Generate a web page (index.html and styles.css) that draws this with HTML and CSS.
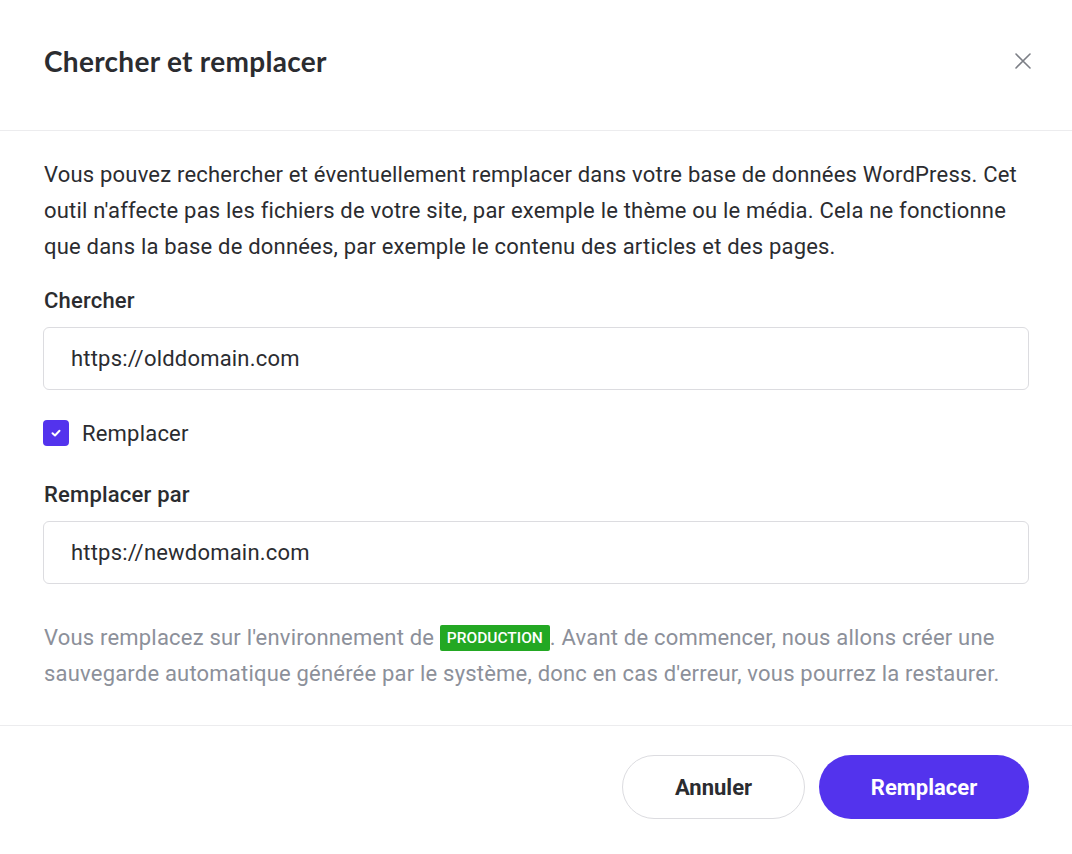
FILE: index.html
```html
<!DOCTYPE html>
<html lang="fr">
<head>
<meta charset="utf-8">
<link rel="stylesheet" href="styles.css">
</head>
<body>
<div class="modal">
  <header class="modal-header">
    <h1 class="modal-title">Chercher et remplacer</h1>
    <button class="close" aria-label="Fermer">
      <svg width="18" height="18" viewBox="0 0 18 18"><path d="M2 2 L16 16 M16 2 L2 16" stroke="#7c7f86" stroke-width="1.6" stroke-linecap="round" fill="none"/></svg>
    </button>
  </header>
  <main class="modal-body">
    <p class="intro">Vous pouvez rechercher et éventuellement remplacer dans votre base de données WordPress. Cet outil n'affecte pas les fichiers de votre site, par exemple le thème ou le média. Cela ne fonctionne que dans la base de données, par exemple le contenu des articles et des pages.</p>
    <label class="field-label">Chercher</label>
    <div class="input">https://olddomain.com</div>
    <div class="check-row">
      <span class="checkbox"><svg width="14" height="14" viewBox="0 0 14 14"><path d="M3.5 7.2 L6 9.5 L10.5 4.8" stroke="#fff" stroke-width="2" stroke-linecap="round" stroke-linejoin="round" fill="none"/></svg></span>
      <span class="check-label">Remplacer</span>
    </div>
    <label class="field-label">Remplacer par</label>
    <div class="input">https://newdomain.com</div>
    <p class="note">Vous remplacez sur l'environnement de <span class="badge">PRODUCTION</span>. Avant de commencer, nous allons créer une sauvegarde automatique générée par le système, donc en cas d'erreur, vous pourrez la restaurer.</p>
  </main>
  <footer class="modal-footer">
    <button class="btn btn-secondary">Annuler</button>
    <button class="btn btn-primary">Remplacer</button>
  </footer>
</div>
</body>
</html>
```

FILE: styles.css
```css
* { box-sizing: border-box; }
html, body { margin: 0; padding: 0; background: #fff; }
body { font-family: Roboto, "Liberation Sans", sans-serif; color: #2b2c30; }

.modal { width: 1072px; height: 854px; display: flex; flex-direction: column; }

.modal-header {
  height: 131px;
  display: flex;
  align-items: center;
  justify-content: space-between;
  padding: 0 37px 8px 44px;
  border-bottom: 1px solid #ececee;
}
.modal-title {
  margin: 0;
  font-family: Lato, "Open Sans", sans-serif;
  font-weight: 700;
  font-size: 28px;
  letter-spacing: 0.3px;
  color: #2b2c30;
}
.close { background: none; border: 0; padding: 0; width: 24px; height: 24px; display: flex; align-items: center; justify-content: center; cursor: pointer; }

.modal-body { padding: 26px 43px 0 43px; letter-spacing: 0.2px; }
.intro { margin: 0 0 18px 1px; font-size: 22px; line-height: 36px; color: #2b2c30; }
.field-label { display: block; font-size: 22px; font-weight: 500; line-height: 36px; margin-left: 1px; margin-bottom: 8px; color: #2b2c30; }
.input {
  height: 63px;
  border: 1px solid #dcdce0;
  border-radius: 6px;
  padding: 0 27px;
  display: flex;
  align-items: center;
  font-size: 22px;
  color: #2b2c30;
}
.check-row { display: flex; align-items: center; gap: 13px; margin: 30px 0 31px 0; height: 26px; }
.checkbox { width: 26px; height: 26px; border-radius: 4px; background: #5333ed; display: flex; align-items: center; justify-content: center; }
.check-label { font-size: 22px; color: #2b2c30; }

.note { margin: 36px 0 0 1px; font-size: 22px; line-height: 36px; color: #8c909a; }
.badge {
  display: inline-block;
  background: #23a823;
  color: #fff;
  font-size: 15.5px;
  font-weight: 500;
  letter-spacing: 0;
  line-height: 20px;
  padding: 3px 7px;
  border-radius: 2px;
  vertical-align: 2px;
}

.modal-footer {
  margin-top: auto;
  height: 129px;
  border-top: 1px solid #ececee;
  display: flex;
  justify-content: flex-end;
  align-items: flex-start;
  gap: 14px;
  padding: 29px 43px 0 0;
}
.btn {
  height: 64px;
  border-radius: 32px;
  font-family: Roboto, "Liberation Sans", sans-serif;
  font-size: 22px;
  font-weight: 700;
  cursor: pointer;
}
.btn-secondary { width: 183px; background: #fff; border: 1px solid #dcdce0; color: #2b2c30; }
.btn-primary { width: 210px; background: #5333ed; border: 0; color: #fff; }
```
